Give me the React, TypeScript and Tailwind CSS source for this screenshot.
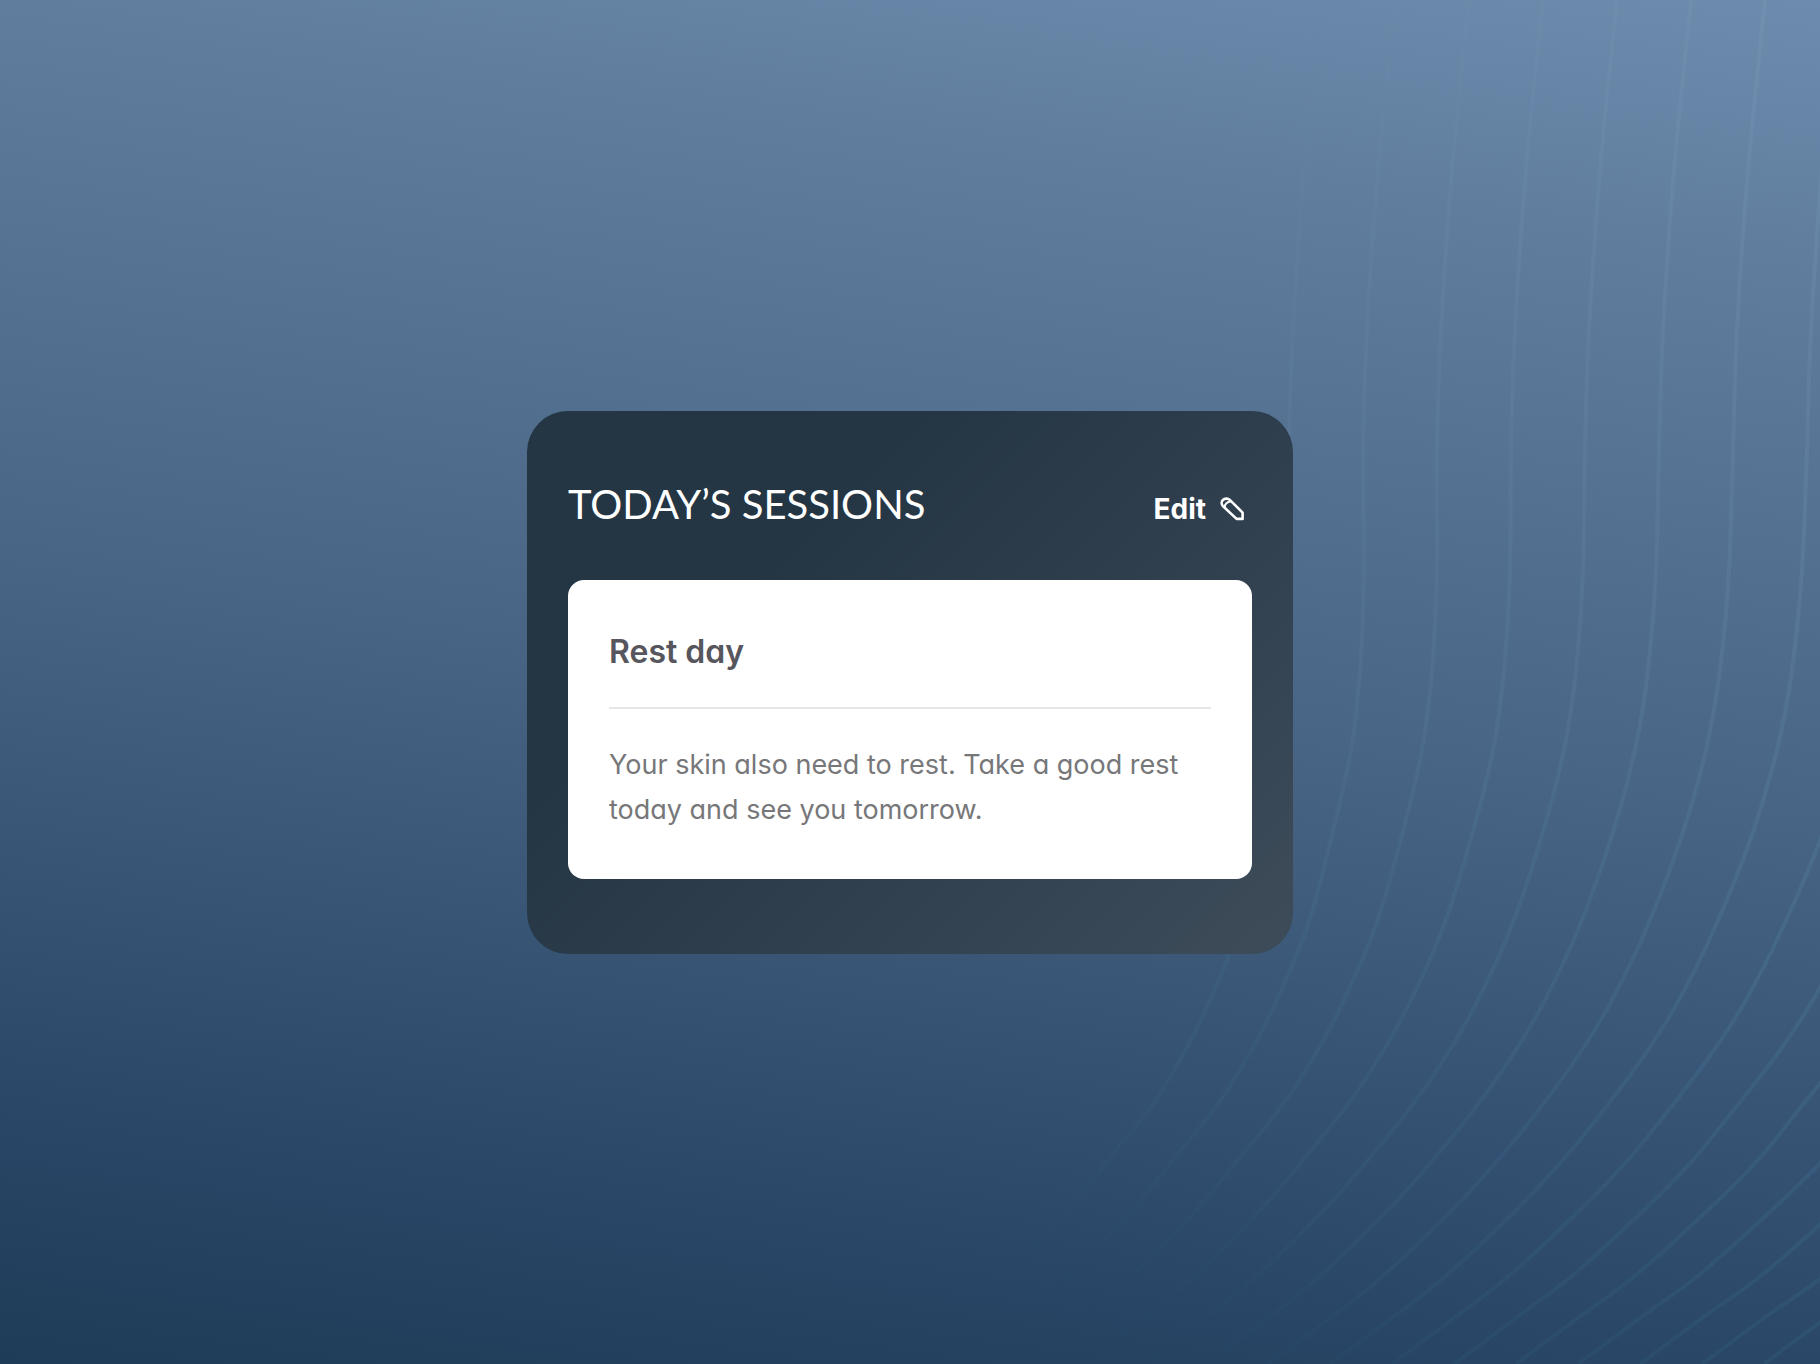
type Session = {
  title: string
  description: string
}

const session: Session = {
  title: 'Rest day',
  description:
    'Your skin also need to rest. Take a good rest today and see you tomorrow.',
}

// x, y and the gap to the neighbouring line at that height
const wave = [
  [1765, 0, 74],
  [1748, 170, 74],
  [1737, 330, 74],
  [1733, 450, 74],
  [1729, 570, 73],
  [1720, 670, 72],
  [1706, 750, 71],
  [1682, 835, 70],
  [1648, 925, 68],
  [1612, 1000, 67],
  [1580, 1053, 66],
  [1541, 1107, 65],
  [1498, 1160, 65],
  [1453, 1209, 64],
  [1384, 1275, 63],
  [1330, 1318, 62],
  [1268, 1364, 62],
]

const lines = [-6, -5, -4, -3, -2, -1, 0, 1, 2, 3, 4, 5, 6, 7, 8, 9]

function wavePath(step: number) {
  const points = wave.map(([x, y, gap]) => [x + gap * step, y])
  let path = `M${points[0][0]} ${points[0][1]}`

  for (let i = 0; i < points.length - 1; i++) {
    const before = points[i - 1] || points[i]
    const from = points[i]
    const to = points[i + 1]
    const after = points[i + 2] || to
    path += ` C${from[0] + (to[0] - before[0]) / 6} ${from[1] + (to[1] - before[1]) / 6}`
    path += ` ${to[0] - (after[0] - from[0]) / 6} ${to[1] - (after[1] - from[1]) / 6}`
    path += ` ${to[0]} ${to[1]}`
  }

  return path
}

function Waves() {
  return (
    <svg
      className="absolute inset-0 h-full w-full"
      viewBox="0 0 1820 1364"
      preserveAspectRatio="xMaxYMax slice"
      fill="none"
      aria-hidden="true"
    >
      <defs>
        <linearGradient id="tint" gradientUnits="userSpaceOnUse" x1="0" y1="0" x2="0" y2="1364">
          <stop offset="0" stopColor="#8fb0d2" stopOpacity="0.8" />
          <stop offset="0.3" stopColor="#86a9cc" stopOpacity="0.8" />
          <stop offset="0.5" stopColor="#7ea6c8" stopOpacity="0.9" />
          <stop offset="0.7" stopColor="#5f9dbd" />
          <stop offset="1" stopColor="#3f86a6" stopOpacity="0.8" />
        </linearGradient>
        <linearGradient id="fade" gradientUnits="userSpaceOnUse" x1="1240" y1="0" x2="1820" y2="0">
          <stop offset="0" stopColor="#fff" stopOpacity="0.45" />
          <stop offset="1" stopColor="#fff" />
        </linearGradient>
        {/* the lines die out towards the lower left and the top */}
        <linearGradient id="corner" gradientUnits="userSpaceOnUse" x1="1000" y1="1240" x2="1180" y2="1060">
          <stop offset="0" stopColor="#000" />
          <stop offset="1" stopColor="#000" stopOpacity="0" />
        </linearGradient>
        <linearGradient id="top" gradientUnits="userSpaceOnUse" x1="1400" y1="0" x2="1560" y2="200">
          <stop offset="0" stopColor="#000" stopOpacity="0.8" />
          <stop offset="1" stopColor="#000" stopOpacity="0" />
        </linearGradient>
        <mask id="reveal" maskUnits="userSpaceOnUse" x="0" y="0" width="1820" height="1364">
          <rect width="1820" height="1364" fill="url(#fade)" />
          <rect width="1820" height="1364" fill="url(#corner)" />
          <rect width="1820" height="1364" fill="url(#top)" />
        </mask>
      </defs>
      <g mask="url(#reveal)" stroke="url(#tint)" strokeWidth="4" strokeOpacity="0.17">
        {lines.map((step) => (
          <path key={step} d={wavePath(step)} />
        ))}
      </g>
    </svg>
  )
}

function PencilIcon() {
  return (
    <svg
      className="size-6"
      viewBox="0 0 24 24"
      fill="none"
      stroke="currentColor"
      strokeWidth="2.6"
      strokeLinejoin="round"
      aria-hidden="true"
    >
      <path d="M9.8 2.9 22.6 15.6V21.9H16.6L3.1 9.3C1.3 7.5 1.2 4.7 2.9 3 4.7 1.2 7.9 1.1 9.8 2.9Z" />
      <path d="M4.6 10.2C4.8 7.2 7.4 4.8 10.8 4.4" strokeWidth="2.2" />
    </svg>
  )
}

function SessionCard({ session }: { session: Session }) {
  return (
    <article className="rounded-2xl bg-white px-[41px] pt-[52px] pb-[47px]">
      <h2 className="border-b-2 border-[#e6e6e8] pb-[35px] text-[32px] leading-10 font-semibold text-[#56565c]">
        {session.title}
      </h2>
      <p className="pt-[33px] text-[27px] leading-[45px] text-[#77777a]">
        {session.description}
      </p>
    </article>
  )
}

export default function App() {
  return (
    <main className="relative flex min-h-screen items-center justify-center bg-[linear-gradient(188deg,#6d8cad_0%,#607d9e_16%,#486586_50%,#2a4768_84%,#1e3b57_100%)] font-['Inter',sans-serif] [font-feature-settings:'cv11']">
      <Waves />
      <section className="relative w-full max-w-[766px] rounded-[41px] bg-[linear-gradient(135deg,#243544_30%,#3e4c5a_100%)] px-[41px] pt-[69px] pb-[75px]">
        <header className="flex items-baseline justify-between pr-2 pb-[52px] text-white">
          <h1 className="font-['Lato',sans-serif] text-[40px] leading-12 uppercase">
            Today’s sessions
          </h1>
          <button
            type="button"
            className="flex cursor-pointer items-center gap-3.5 text-[28px] leading-9 font-bold"
          >
            Edit
            <PencilIcon />
          </button>
        </header>
        <SessionCard session={session} />
      </section>
    </main>
  )
}
